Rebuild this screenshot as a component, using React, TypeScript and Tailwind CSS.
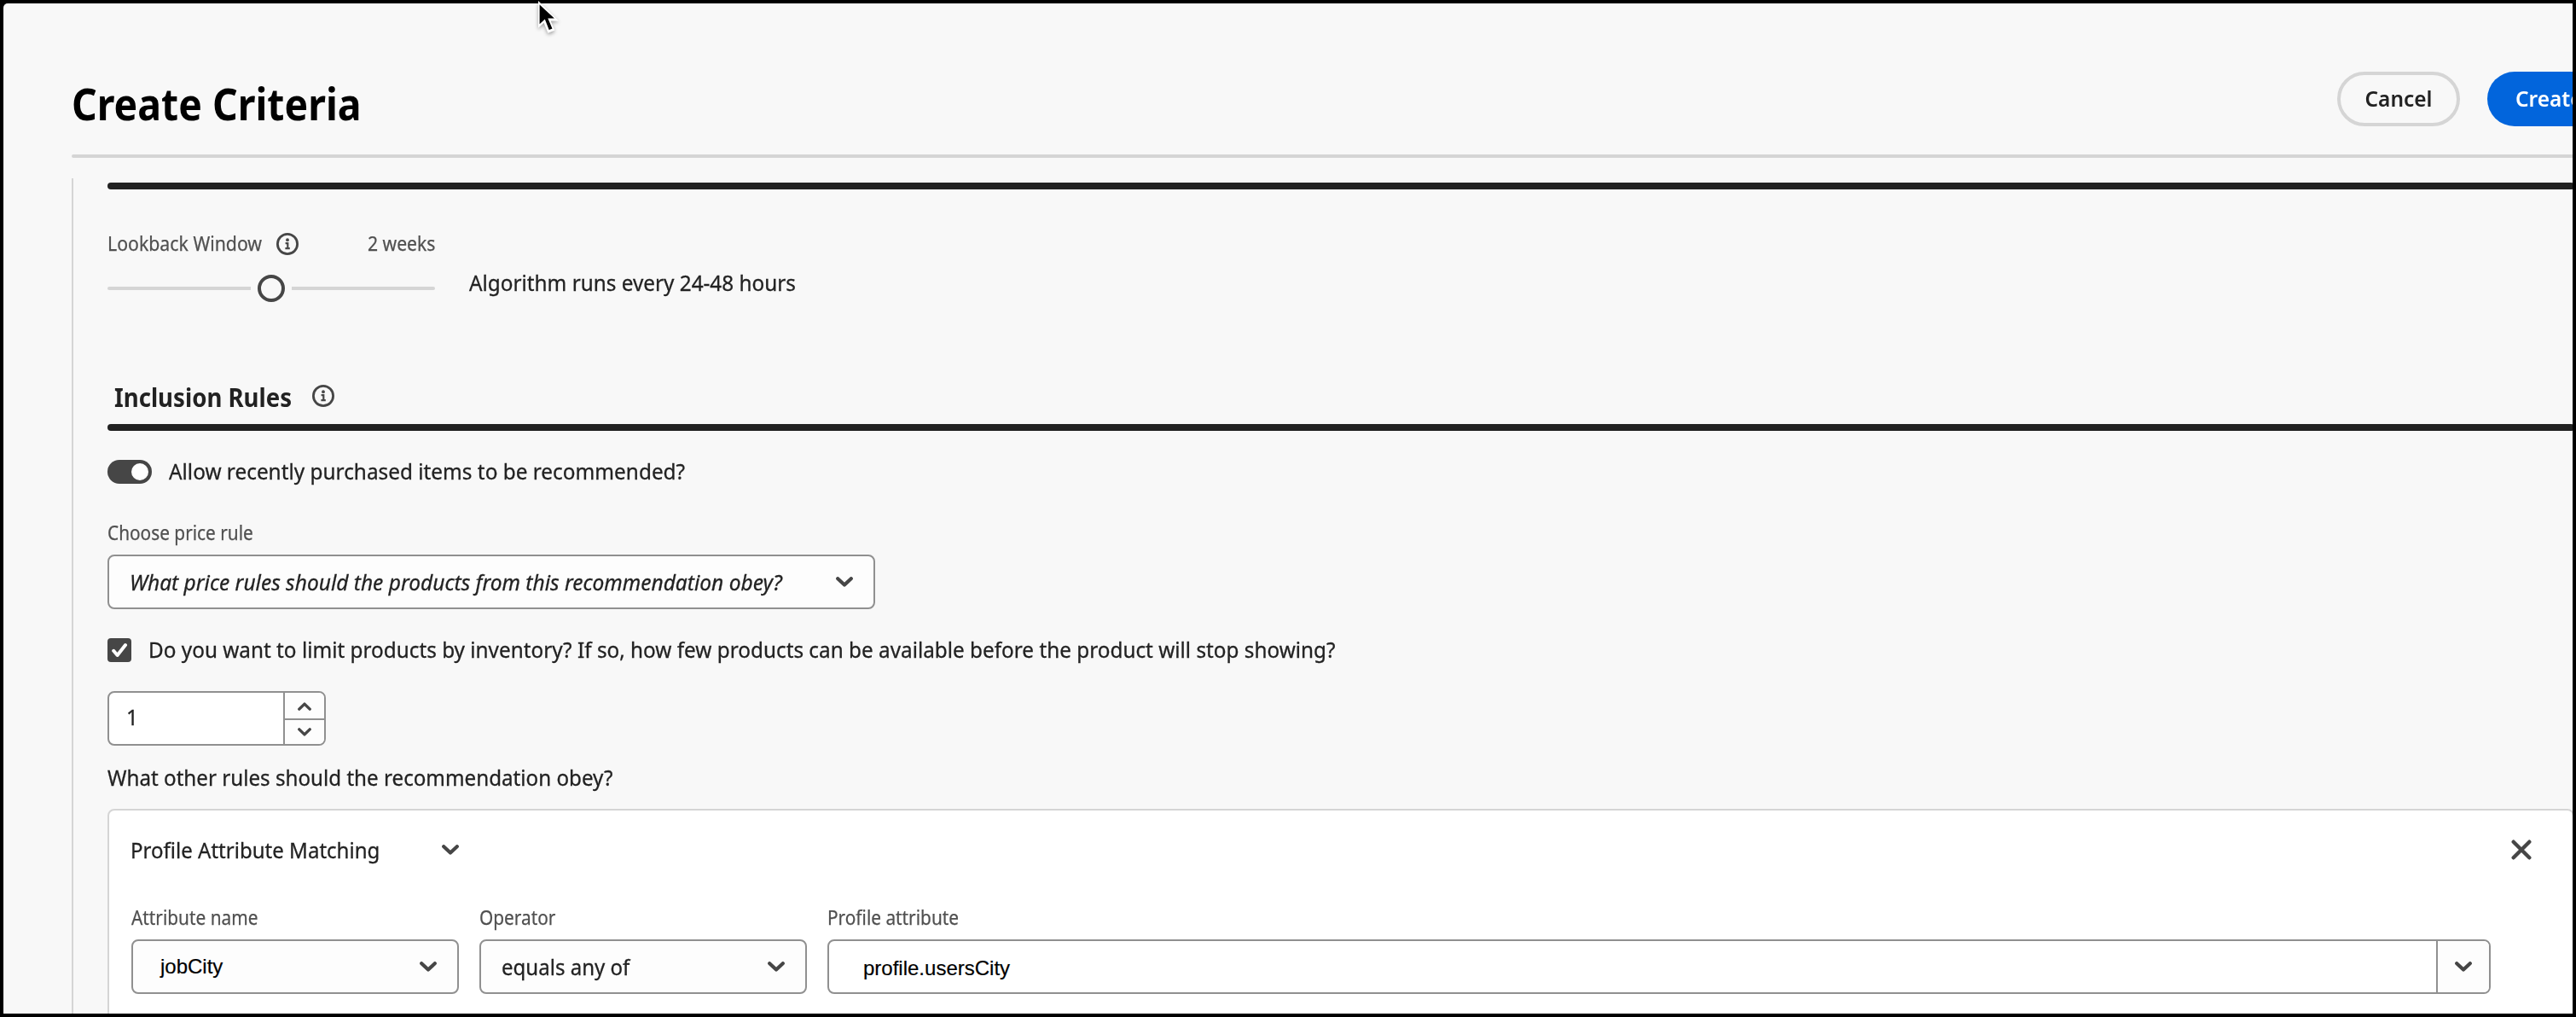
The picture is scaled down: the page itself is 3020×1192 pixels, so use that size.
import type { ReactNode } from "react";

function Chevron({ className = "" }: { className?: string }) {
  return (
    <svg className={`h-3 w-5 shrink-0 ${className}`} viewBox="0 0 20 12" fill="none" stroke="#464646" strokeWidth="4.2" strokeLinecap="round" strokeLinejoin="round">
      <path d="M2.2 2.2 10 9.6l7.8-7.4" />
    </svg>
  );
}

function SmallChevron({ className = "" }: { className?: string }) {
  return (
    <svg className={`h-[10px] w-4 ${className}`} viewBox="0 0 16 10" fill="none" stroke="#464646" strokeWidth="3.4" strokeLinecap="round" strokeLinejoin="round">
      <path d="M1.8 1.9 8 7.9l6.2-6" />
    </svg>
  );
}

function InfoIcon({ className = "" }: { className?: string }) {
  return (
    <svg className={`size-[26px] shrink-0 ${className}`} viewBox="0 0 26 26" fill="none">
      <circle cx="13" cy="13" r="11.6" stroke="#464646" strokeWidth="2.8" />
      <circle cx="13" cy="8.2" r="1.9" fill="#464646" />
      <path d="M10.6 12.2h2.7v6M10.4 18.2h5.4" stroke="#464646" strokeWidth="2.2" />
    </svg>
  );
}

function Pointer() {
  return (
    <svg className="absolute left-[626px] top-0 h-11 w-8 drop-shadow-[0_2px_2px_rgba(0,0,0,0.35)]" viewBox="0 0 32 44">
      <path d="M5 1v31.8l6.6-6 4.8 12 8-3.4-4.8-11h9.4z" fill="#fff" />
      <path d="M6.6 5.6v22.6l6.2-5.8 4.9 12.6 3.8-1.6-5.2-12h7.6z" fill="#000" />
    </svg>
  );
}

function Label({ children, scale = "scale-x-[0.905]" }: { children: ReactNode; scale?: string }) {
  return (
    <div className={`h-7 w-max origin-left text-[23px] leading-7 whitespace-nowrap text-[#505050] [-webkit-text-stroke:0.25px] ${scale}`}>{children}</div>
  );
}

function Body({ children, className = "", scale = "scale-x-[0.935]" }: { children: ReactNode; className?: string; scale?: string }) {
  return (
    <div className={`h-9 w-max origin-left text-[26px] leading-9 whitespace-nowrap text-[#222] [-webkit-text-stroke:0.3px] ${scale} ${className}`}>{children}</div>
  );
}

function Picker({ children, className = "" }: { children: ReactNode; className?: string }) {
  return (
    <div className={`flex h-16 items-center justify-between rounded-lg border-2 border-[#909090] bg-[#fdfdfd] pr-6 ${className}`}>
      {children}
      <Chevron />
    </div>
  );
}

export default function App() {
  return (
    <div className="relative h-[1192px] w-[3020px] overflow-hidden bg-black p-1 font-['Noto_Sans',sans-serif]">
      <div className="flex h-full flex-col overflow-hidden rounded-tl-[5px] bg-[#f8f8f8] pl-20">
        <header className="flex h-[177px] shrink-0 items-start pt-20">
          <div className="w-[2656px] shrink-0">
            <h1 className="mt-[5px] w-max origin-left scale-x-[0.892] text-[52px] leading-16 font-bold text-black">Create Criteria</h1>
          </div>
          <div className="flex shrink-0 gap-8">
            <button className="flex h-16 w-36 items-center justify-center rounded-full border-4 border-[#d5d5d5]">
              <span className="-mt-[3px] scale-x-[0.94] text-[26px] leading-9 font-semibold text-[#222]">Cancel</span>
            </button>
            <button className="flex h-16 w-[220px] items-center rounded-full bg-[#0265dc] pl-[33px]">
              <span className="-mt-[3px] origin-left scale-x-[0.94] text-[26px] leading-9 font-semibold text-white">Create</span>
            </button>
          </div>
        </header>
        <div className="h-1 w-[2940px] shrink-0 rounded-l-sm bg-[#d5d5d5]" />

        <main className="mt-6 grow border-l-2 border-[#d5d5d5] pl-10">
          <div className="w-[2892px] pt-[5px]">
            <div className="h-2 rounded bg-[#222]" />

            <section className="mt-[49px] flex h-[83px]">
              <div className="w-96">
                <div className="flex h-7 justify-between">
                  <div className="flex">
                    <div className="w-[198px]"><Label scale="scale-x-[0.925]">Lookback Window</Label></div>
                    <InfoIcon className="mt-0.5" />
                  </div>
                  <div className="origin-right scale-x-[0.92] text-[23px] leading-7 text-[#505050] [-webkit-text-stroke:0.25px]">2 weeks</div>
                </div>
                <div className="mt-[23px] flex h-8 items-center justify-between">
                  <div className="h-1 w-42 rounded-l-sm bg-[#d5d5d5]" />
                  <div className="size-8 rounded-full border-4 border-[#464646]" />
                  <div className="h-1 w-42 rounded-r-sm bg-[#d5d5d5]" />
                </div>
              </div>
              <Body className="mt-[42px] ml-10">Algorithm runs every 24-48 hours</Body>
            </section>

            <section className="mt-[91px] flex h-10 pl-[7px]">
              <div className="w-[233px]">
                <h2 className="ml-px w-max origin-left scale-x-[0.89] text-[31px] leading-10 font-bold text-[#222]">Inclusion Rules</h2>
              </div>
              <InfoIcon className="mt-1.5" />
            </section>
            <div className="mt-3 h-2 rounded bg-[#222]" />

            <div className="mt-[29px] flex h-9 items-center gap-5">
              <div className="mt-0.5 flex h-7 w-[52px] items-center justify-end rounded-full bg-[#464646] pr-1">
                <div className="size-5 rounded-full bg-white" />
              </div>
              <Body scale="scale-x-[0.937]">Allow recently purchased items to be recommended?</Body>
            </div>

            <div className="mt-10"><Label>Choose price rule</Label></div>
            <Picker className="mt-3 w-[900px] pl-6">
              <span className="-mr-20 origin-left scale-x-[0.943] text-[26px] leading-9 whitespace-nowrap text-[#222] italic [-webkit-text-stroke:0.3px]">
                What price rules should the products from this recommendation obey?
              </span>
            </Picker>

            <div className="mt-[29px] flex h-9 items-center gap-5">
              <div className="mt-0.5 size-7 rounded bg-[#464646]">
                <svg className="size-7" viewBox="0 0 28 28" fill="none" stroke="#fff" strokeWidth="4" strokeLinecap="round" strokeLinejoin="round">
                  <path d="m7.2 14.8 4.4 5.2L21 8" />
                </svg>
              </div>
              <Body>Do you want to limit products by inventory? If so, how few products can be available before the product will stop showing?</Body>
            </div>

            <div className="mt-[31px] flex h-16 w-64 overflow-hidden rounded-lg border-2 border-[#909090] bg-white">
              <div className="grow pt-2.5 pl-5"><Body>1</Body></div>
              <div className="flex w-12 flex-col border-l-2 border-[#909090] bg-[#fdfdfd]">
                <div className="flex h-8 items-center justify-center border-b-2 border-[#909090]">
                  <SmallChevron className="mt-0.5 rotate-180" />
                </div>
                <div className="flex h-7 items-center justify-center">
                  <SmallChevron />
                </div>
              </div>
            </div>

            <Body className="mt-[19px]" scale="scale-x-[0.93]">What other rules should the recommendation obey?</Body>

            <section className="mt-[19px] h-72 rounded-lg border-2 border-[#d5d5d5] bg-white pt-7 pl-[26px]">
              <div className="flex h-9 items-center">
                <div className="w-[364px]"><Body className="-ml-px" scale="scale-x-[0.925]">Profile Attribute Matching</Body></div>
                <Chevron />
                <svg className="ml-[2406px] size-6" viewBox="0 0 24 24" fill="none" stroke="#464646" strokeWidth="4.4" strokeLinecap="round">
                  <path d="m2.7 2.7 18.6 18.6M21.3 2.7 2.7 21.3" />
                </svg>
              </div>
              <div className="mt-[47px] grid grid-cols-[384px_384px_1950px] gap-x-6 gap-y-3">
                <Label>Attribute name</Label>
                <Label>Operator</Label>
                <Label>Profile attribute</Label>
                <Picker className="pl-8">
                  <span className="font-['Liberation_Sans',sans-serif] text-[24px] leading-9 text-black [-webkit-text-stroke:0.2px]">jobCity</span>
                </Picker>
                <Picker className="pl-6"><Body scale="scale-x-[0.925]">equals any of</Body></Picker>
                <div className="flex h-16 overflow-hidden rounded-lg border-2 border-[#909090] bg-white">
                  <div className="grow pt-3.5 pl-10 font-['Liberation_Sans',sans-serif] text-[24px] leading-9 text-black [-webkit-text-stroke:0.2px]">profile.usersCity</div>
                  <div className="flex w-[62px] items-center justify-center border-l-2 border-[#909090] bg-[#fdfdfd]">
                    <Chevron />
                  </div>
                </div>
              </div>
            </section>
          </div>
        </main>
      </div>
      <Pointer />
    </div>
  );
}
